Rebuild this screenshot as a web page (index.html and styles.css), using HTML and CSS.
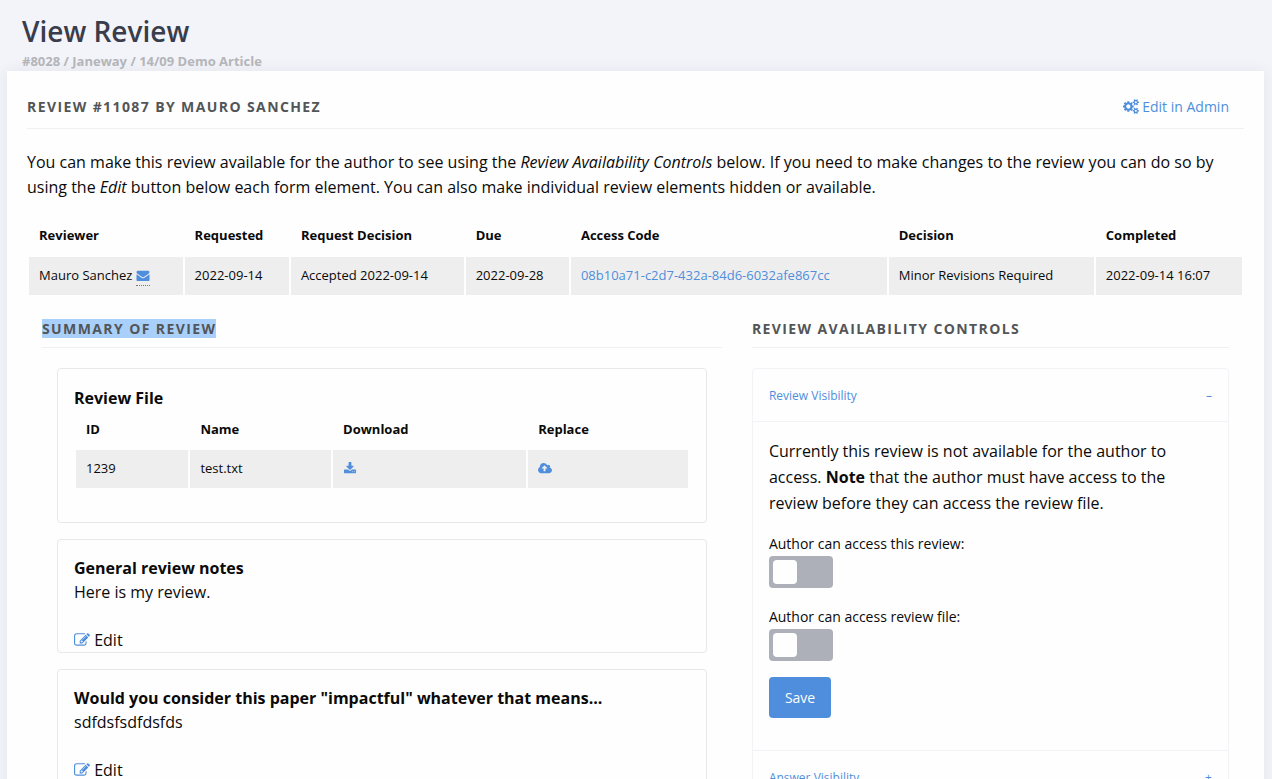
FILE: index.html
```
<!DOCTYPE html>
<html lang="en">
<head>
    <meta charset="UTF-8">
    <meta name="viewport" content="width=device-width, initial-scale=1.0">
    <title>View Review</title>
    <link rel="stylesheet" href="styles.css">
</head>
<body>

<!-- icon set -->
<svg class="icon-defs" aria-hidden="true">
    <symbol id="icon-cogs" viewBox="-64 0 1920 1792"><path d="M832 896q0-106-75-181t-181-75-181 75-75 181 75 181 181 75 181-75 75-181zm768 512q0-52-38-90t-90-38-90 38-38 90q0 53 37.5 90.5t90.5 37.5 90.5-37.5 37.5-90.5zm0-1024q0-52-38-90t-90-38-90 38-38 90q0 53 37.5 90.5t90.5 37.5 90.5-37.5 37.5-90.5zm-384 421v185q0 10-7 19.5t-16 10.5l-155 24q-11 35-32 76 34 48 90 115 7 11 7 20 0 12-7 19-23 30-82.5 89.5t-78.5 59.5q-11 0-21-7l-115-90q-37 19-77 31-11 108-23 155-7 24-30 24h-186q-11 0-20-7.5t-10-17.5l-23-153q-34-10-75-31l-118 89q-7 7-20 7-11 0-21-8-144-133-144-160 0-9 7-19 10-14 41-53t47-61q-23-44-35-82l-152-24q-10-1-17-9.5t-7-19.5v-185q0-10 7-19.5t16-10.5l155-24q11-35 32-76-34-48-90-115-7-11-7-20 0-12 7-20 22-30 82-89t79-59q11 0 21 7l115 90q34-18 77-32 11-108 23-154 7-24 30-24h186q11 0 20 7.5t10 17.5l23 153q34 10 75 31l118-89q8-7 20-7 11 0 21 8 144 133 144 160 0 8-7 19-12 16-42 54t-45 60q23 48 34 82l152 23q10 2 17 10.5t7 19.5zm640 533v140q0 16-149 31-12 27-30 52 51 113 51 138 0 4-4 7-122 71-124 71-8 0-46-47t-52-68q-20 2-30 2t-30-2q-14 21-52 68t-46 47q-2 0-124-71-4-3-4-7 0-25 51-138-18-25-30-52-149-15-149-31v-140q0-16 149-31 13-29 30-52-51-113-51-138 0-4 4-7 4-2 35-20t59-34 30-16q8 0 46 46.5t52 67.5q20-2 30-2t30 2q51-71 92-112l6-2q4 0 124 70 4 3 4 7 0 25-51 138 17 23 30 52 149 15 149 31zm0-1024v140q0 16-149 31-12 27-30 52 51 113 51 138 0 4-4 7-122 71-124 71-8 0-46-47t-52-68q-20 2-30 2t-30-2q-14 21-52 68t-46 47q-2 0-124-71-4-3-4-7 0-25 51-138-18-25-30-52-149-15-149-31v-140q0-16 149-31 13-29 30-52-51-113-51-138 0-4 4-7 4-2 35-20t59-34 30-16q8 0 46 46.5t52 67.5q20-2 30-2t30 2q51-71 92-112l6-2q4 0 124 70 4 3 4 7 0 25-51 138 17 23 30 52 149 15 149 31z"/></symbol>
    <symbol id="icon-envelope" viewBox="0 0 1792 1792"><path d="M1792 710v794q0 66-47 113t-113 47h-1472q-66 0-113-47t-47-113v-794q44 49 101 87 362 246 497 345 57 42 92.5 65.5t94.5 48 110 24.5h2q51 0 110-24.5t94.5-48 92.5-65.5q170-123 498-345 57-39 100-87zm0-294q0 79-49 151t-122 123q-376 261-468 325-10 7-42.5 31t-54 38.5-52 32.5-57.5 27-50 9h-2q-23 0-50-9t-57.5-27-52-32.5-54-38.5-42.5-31q-91-64-262-182.5t-205-142.5q-62-42-117-115.5t-55-136.5q0-78 41.5-130t118.5-52h1472q65 0 112.5 47t47.5 113z"/></symbol>
    <symbol id="icon-download" viewBox="64 0 1664 1792"><path d="M1344 1344q0-26-19-45t-45-19-45 19-19 45 19 45 45 19 45-19 19-45zm256 0q0-26-19-45t-45-19-45 19-19 45 19 45 45 19 45-19 19-45zm128-224v320q0 40-28 68t-68 28h-1472q-40 0-68-28t-28-68v-320q0-40 28-68t68-28h465l135 136q58 56 136 56t136-56l136-136h464q40 0 68 28t28 68zm-325-569q17 41-14 70l-448 448q-18 19-45 19t-45-19l-448-448q-31-29-14-70 17-39 59-39h256v-448q0-26 19-45t45-19h256q26 0 45 19t19 45v448h256q42 0 59 39z"/></symbol>
    <symbol id="icon-cloud-upload" viewBox="-64 0 1920 1792"><path d="M1216 864q0-14-9-23l-352-352q-9-9-23-9t-23 9l-351 351q-10 12-10 24 0 14 9 23t23 9h224v352q0 13 9.5 22.5t22.5 9.5h192q13 0 22.5-9.5t9.5-22.5v-352h224q13 0 22.5-9.5t9.5-22.5zm640 288q0 159-112.5 271.5t-271.5 112.5h-1088q-185 0-316.5-131.5t-131.5-316.5q0-130 70-240t188-165q-2-30-2-43 0-212 150-362t362-150q156 0 285.5 87t188.5 231q71-62 166-62 106 0 181 75t75 181q0 76-41 138 130 31 213.5 135.5t83.5 238.5z"/></symbol>
    <symbol id="icon-edit" viewBox="0 0 1792 1792"><path d="M888 1184l116-116-152-152-116 116v56h96v96h56zm440-720q-16-16-33 1l-350 350q-17 17-1 33t33-1l350-350q17-17 1-33zm80 594v190q0 119-84.5 203.5t-203.5 84.5h-832q-119 0-203.5-84.5t-84.5-203.5v-832q0-119 84.5-203.5t203.5-84.5h832q63 0 117 25 15 7 18 23 3 17-9 29l-49 49q-14 14-32 8-23-6-45-6h-832q-66 0-113 47t-47 113v832q0 66 47 113t113 47h832q66 0 113-47t47-113v-126q0-13 9-22l64-64q15-15 35-7t20 29zm-96-738l288 288-672 672h-288v-288zm444 132l-92 92-288-288 92-92q28-28 68-28t68 28l152 152q28 28 28 68t-28 68z"/></symbol>
</svg>

<header class="page-header">
    <h1>View Review</h1>
    <small>#8028 / Janeway / 14/09 Demo Article</small>
</header>

<main class="box">
    <div class="title-area">
        <h2>Review #11087 by Mauro Sanchez</h2>
        <a href="#" class="admin-link"><svg class="icon"><use href="#icon-cogs"/></svg> Edit in Admin</a>
    </div>

    <p class="intro">You can make this review available for the author to see using the <em>Review Availability Controls</em> below. If you need to make changes to the review you can do so by using the <em>Edit</em> button below each form element. You can also make individual review elements hidden or available.</p>

    <table class="data-table">
        <thead>
            <tr>
                <th>Reviewer</th>
                <th>Requested</th>
                <th>Request Decision</th>
                <th>Due</th>
                <th>Access Code</th>
                <th>Decision</th>
                <th>Completed</th>
            </tr>
        </thead>
        <tbody>
            <tr>
                <td>Mauro Sanchez <a href="#" class="mail-link" aria-label="Email reviewer"><svg class="icon"><use href="#icon-envelope"/></svg></a></td>
                <td>2022-09-14</td>
                <td>Accepted 2022-09-14</td>
                <td>2022-09-28</td>
                <td><a href="#">08b10a71-c2d7-432a-84d6-6032afe867cc</a></td>
                <td>Minor Revisions Required</td>
                <td>2022-09-14 16:07</td>
            </tr>
        </tbody>
    </table>

    <div class="columns">
        <section class="column">
            <div class="title-area">
                <h2><mark>Summary of Review</mark></h2>
            </div>

            <div class="cards">
                <div class="card file-card">
                    <h3>Review File</h3>
                    <table class="data-table">
                        <thead>
                            <tr>
                                <th>ID</th>
                                <th>Name</th>
                                <th>Download</th>
                                <th>Replace</th>
                            </tr>
                        </thead>
                        <tbody>
                            <tr>
                                <td>1239</td>
                                <td>test.txt</td>
                                <td><a href="#" aria-label="Download file"><svg class="icon"><use href="#icon-download"/></svg></a></td>
                                <td><a href="#" aria-label="Replace file"><svg class="icon"><use href="#icon-cloud-upload"/></svg></a></td>
                            </tr>
                        </tbody>
                    </table>
                </div>

                <div class="card">
                    <h3>General review notes</h3>
                    <p>Here is my review.</p>
                    <a href="#" class="edit-link"><svg class="icon"><use href="#icon-edit"/></svg> <span>Edit</span></a>
                </div>

                <div class="card">
                    <h3>Would you consider this paper "impactful" whatever that means...</h3>
                    <p>sdfdsfsdfdsfds</p>
                    <a href="#" class="edit-link"><svg class="icon"><use href="#icon-edit"/></svg> <span>Edit</span></a>
                </div>
            </div>
        </section>

        <section class="column">
            <div class="title-area">
                <h2>Review Availability Controls</h2>
            </div>

            <div class="accordion">
                <a href="#visibility" class="accordion-title">Review Visibility <span>–</span></a>
                <form class="accordion-content" id="visibility">
                    <p>Currently this review is not available for the author to access. <strong>Note</strong> that the author must have access to the review before they can access the review file.</p>
                    <div class="switch-group">
                        <label for="access-review">Author can access this review:</label>
                        <input type="checkbox" class="switch" id="access-review">
                    </div>
                    <div class="switch-group">
                        <label for="access-file">Author can access review file:</label>
                        <input type="checkbox" class="switch" id="access-file">
                    </div>
                    <button type="submit" class="button">Save</button>
                </form>
                <a href="#answers" class="accordion-title">Answer Visibility <span>+</span></a>
            </div>
        </section>
    </div>
</main>

</body>
</html>
```

FILE: styles.css
```
:root {
    --primary-color: #4f8edc;
    --text-color: #0a0a0a;
    --heading-color: #535557;
    --page-bg: #f3f4f9;
    --white: #fefefe;
}

* {
    box-sizing: border-box;
}

body {
    margin: 0;
    font-family: 'Open Sans', 'Liberation Sans', sans-serif;
    font-size: 16px;
    line-height: 24px;
    color: var(--text-color);
    background-color: var(--page-bg);
}

h1, h2, h3, p {
    margin: 0;
}

a {
    color: var(--primary-color);
    text-decoration: none;
}

.icon-defs {
    display: none;
}

.icon {
    width: 14px;
    height: 13px;
    fill: currentColor;
    vertical-align: -2px;
}

/* Page header */
.page-header {
    padding: 11px 22px 0;
}

.page-header h1 {
    font-size: 28px;
    font-weight: 600;
    line-height: 40px;
    color: #393d4b;
}

.page-header small {
    display: block;
    font-size: 13px;
    font-weight: 700;
    line-height: 20px;
    color: #b4b5b9;
}

.box {
    margin: 0 8px 0 7px;
    padding: 20px;
    background-color: var(--white);
    box-shadow: 0 0 14px rgba(60, 60, 110, 0.08);
}

.title-area {
    display: flex;
    justify-content: space-between;
    border-bottom: 1px solid #f0f0f1;
    padding: 5px 0 6px;
}

.title-area h2 {
    font-size: 14px;
    font-weight: 700;
    line-height: 24px;
    letter-spacing: 0.1em;
    text-transform: uppercase;
    color: var(--heading-color);
}

.box > .title-area {
    padding: 4px 15px 9px 0;
}

.admin-link {
    font-size: 14px;
}

.admin-link .icon {
    width: 16px;
    height: 15px;
}

mark {
    color: inherit;
    background-color: #a8d0fb;
}

.intro {
    margin-top: 21px;
    line-height: 25px;
}

/* Tables */
.data-table {
    width: 100%;
    border-spacing: 2px;
    font-size: 13px;
    line-height: 18px;
}

.data-table th,
.data-table td {
    padding: 9px 10px 11px;
    text-align: left;
}

.data-table th {
    font-weight: 700;
}

.data-table td {
    background-color: #eee;
}

.box > .data-table {
    margin-top: 15px;
}

.mail-link {
    padding-bottom: 1px;
    border-bottom: 1px dotted #777;
}

/* Summary and controls */
.columns {
    display: grid;
    grid-template-columns: 7fr 5fr;
    margin-top: 15px;
}

.column {
    min-width: 0;
    padding: 0 15px;
}

.cards {
    display: flex;
    flex-direction: column;
    gap: 16px;
    padding: 20px 15px;
}

.card {
    padding: 16px 16px 0;
    border: 1px solid #e8e8e9;
    border-radius: 4px;
    background-color: var(--white);
}

.card h3 {
    font-size: 16px;
    font-weight: 700;
    line-height: 24px;
}

.card p {
    margin-bottom: 24px;
}

.file-card {
    padding-top: 18px;
    padding-bottom: 32px;
}

.file-card h3 {
    line-height: 22px;
}

.file-card th {
    padding-bottom: 10px;
}

.edit-link {
    display: block;
}

.edit-link span {
    color: var(--text-color);
}

.edit-link .icon {
    width: 16px;
    height: 16px;
}

.accordion {
    margin-top: 20px;
    border: 1px solid #f3f3f7;
    border-radius: 4px;
}

.accordion-title {
    display: flex;
    justify-content: space-between;
    padding: 21px 16px 19px;
    font-size: 12px;
    line-height: 12px;
}

.accordion-content {
    padding: 16px 16px 32px;
    border-top: 1px solid #f3f3f7;
    border-bottom: 1px solid #f3f3f7;
}

.accordion-content p {
    margin-bottom: 15px;
    line-height: 26px;
}

.switch-group {
    margin-bottom: 16px;
}

.switch-group label {
    display: block;
    font-size: 14px;
    line-height: 25px;
}

.switch {
    appearance: none;
    display: block;
    width: 64px;
    height: 32px;
    margin: 0;
    padding: 4px;
    border-radius: 4px;
    background-color: #adb0b9;
    cursor: pointer;
}

.switch::before {
    content: "";
    display: block;
    width: 24px;
    height: 24px;
    border-radius: 4px;
    background-color: var(--white);
}

.switch:checked {
    background-color: var(--primary-color);
}

.switch:checked::before {
    margin-left: auto;
}

.button {
    display: block;
    padding: 12px 16px;
    border: none;
    border-radius: 4px;
    font-family: inherit;
    font-size: 14px;
    line-height: 17px;
    color: var(--white);
    background-color: var(--primary-color);
    cursor: pointer;
}
```
